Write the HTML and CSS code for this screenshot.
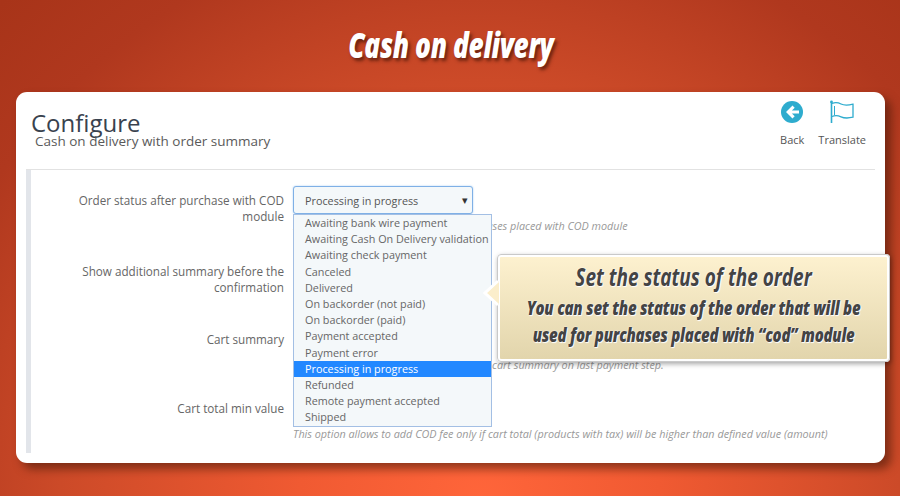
FILE: index.html
```html
<!DOCTYPE html>
<html>
  <head>
    <title>Cash on delivery</title>
    <link rel="stylesheet" href="styles.css">
  </head>
  <body>
    <h1 class="banner"><span>Cash on delivery</span></h1>
    <div class="card">
      <div class="page-head">
        <div class="page-titles">
          <h2>Configure</h2>
          <p>Cash on delivery with order summary</p>
        </div>
        <div class="toolbar">
          <a class="tool">
            <svg width="24" height="24" viewBox="0 0 24 24">
              <circle cx="12" cy="12" r="11" fill="#2eacce"/>
              <path d="M12.5 5.5 6 12l6.5 6.5 2.2-2.2-2.8-2.7H19v-3.2h-7.1l2.8-2.7z" fill="#fff"/>
            </svg>
            <span>Back</span>
          </a>
          <a class="tool">
            <svg width="26" height="24" viewBox="0 0 26 24">
              <circle cx="2.5" cy="2" r="1.4" fill="#2eacce"/>
              <path d="M2.5 2v21" stroke="#2eacce" stroke-width="1.6" fill="none"/>
              <path d="M3 3.5c3-1.2 6-1 9 .5s6 1.6 12 .2v13c-6 1.4-9 1-12-.4s-6-1.6-9-.3" stroke="#2eacce" stroke-width="1.3" fill="none"/>
              <path d="M5.5 6v9" stroke="#2eacce" stroke-width="1" fill="none"/>
            </svg>
            <span>Translate</span>
          </a>
        </div>
      </div>
      <div class="panel">
        <form class="form">
          <label>Order status after purchase with COD module</label>
          <div>
            <div class="select">Processing in progress<i class="caret">&#9662;</i></div>
            <p class="help">Set the status of the next order for purchases placed with COD module</p>
          </div>
          <label>Show additional summary before the confirmation</label>
          <div></div>
          <label>Cart summary</label>
          <div class="control">
            <p class="help">Enable this option if you want to see your cart summary on last payment step.</p>
          </div>
          <label>Cart total min value</label>
          <div class="control">
            <p class="help">This option allows to add COD fee only if cart total (products with tax) will be higher than defined value (amount)</p>
          </div>
        </form>
        <ul class="options">
          <li>Awaiting bank wire payment</li>
          <li>Awaiting Cash On Delivery validation</li>
          <li>Awaiting check payment</li>
          <li>Canceled</li>
          <li>Delivered</li>
          <li>On backorder (not paid)</li>
          <li>On backorder (paid)</li>
          <li>Payment accepted</li>
          <li>Payment error</li>
          <li class="selected">Processing in progress</li>
          <li>Refunded</li>
          <li>Remote payment accepted</li>
          <li>Shipped</li>
        </ul>
      </div>
    </div>
    <div class="callout">
      <svg class="callout-arrow" width="16" height="28" viewBox="0 0 16 28">
        <path d="M16 2 2 14l14 12z" fill="#fbeecb"/>
        <path d="M15 2 2 14l13 12" fill="none" stroke="#fff" stroke-width="3"/>
      </svg>
      <h3>Set the status of the order</h3>
      <p>You can set the status of the order that will be</p>
      <p>used for purchases placed with “cod” module</p>
    </div>
  </body>
</html>
```

FILE: styles.css
```css
html,
body {
  height: 100%;
}

body {
  margin: 0;
  position: relative;
  overflow: hidden;
  padding: 24px 15px 0 16px;
  box-sizing: border-box;
  font-family: "Open Sans", sans-serif;
  background: radial-gradient(circle at 480px 500px, #ff653a 0, #f05a32 180px, #cc4a28 420px, #b0381e 580px, #a83419 690px);
}

.banner {
  display: flex;
  justify-content: center;
  margin: 0;
  height: 68px;
  line-height: 41px;
  color: #fff;
  font-size: 35px;
  font-style: italic;
  font-weight: 800;
  text-shadow: 3px 3px 4px rgba(70, 20, 5, 0.7);
}

.banner span {
  white-space: nowrap;
  letter-spacing: -0.5px;
  transform: scaleX(0.75);
}

.card {
  height: 371px;
  box-sizing: border-box;
  padding: 0 10px 10px;
  background: #fff;
  border-radius: 11px;
  box-shadow: 6px 6px 10px rgba(60, 20, 5, 0.55);
}

.page-head {
  display: flex;
  justify-content: space-between;
  height: 77px;
  border-bottom: 1px solid #e2e2e2;
}

.page-titles {
  padding: 16px 0 0 5px;
}

.page-titles h2 {
  margin: 0;
  font-size: 24px;
  font-weight: normal;
  line-height: 30px;
  color: #39424e;
}

.page-titles p {
  margin: -6px 0 0 4px;
  font-size: 13.5px;
  line-height: 19px;
  color: #5a5a5a;
}

.toolbar {
  display: flex;
  gap: 14px;
  padding: 8px 9px 0 0;
}

.tool {
  display: flex;
  flex-direction: column;
  align-items: center;
  gap: 8px;
  font-size: 11px;
  line-height: 16px;
  color: #555;
}

.panel {
  position: relative;
  height: 283px;
  box-sizing: border-box;
  padding-top: 16px;
  background: #fff;
  border-left: 5px solid #e2e5ea;
}

.form {
  display: grid;
  grid-template-columns: 253px 1fr;
  grid-template-rows: 71px 68px 69px auto;
  column-gap: 9px;
}

.form label {
  padding: 6px 0 0 30px;
  font-size: 11.7px;
  line-height: 16px;
  text-align: right;
  color: #666;
}

.select {
  position: relative;
  width: 180px;
  height: 28px;
  box-sizing: border-box;
  padding-left: 11px;
  font-size: 10.8px;
  line-height: 27px;
  color: #555;
  background: #f4f8fa;
  border: 1px solid #7fb0e6;
  border-radius: 3px;
  box-shadow: 0 0 2px #a9cdf2;
}

.caret {
  position: absolute;
  right: 4px;
  top: -1px;
  font-style: normal;
  font-size: 11px;
  color: #333;
}

.help {
  margin: 4px 0 0;
  font-size: 10.8px;
  line-height: 16px;
  font-style: italic;
  white-space: nowrap;
  color: #999;
}

.control {
  padding-top: 28px;
}

.options {
  position: absolute;
  left: 262px;
  top: 44px;
  width: 199px;
  margin: 0;
  padding: 0;
  box-sizing: border-box;
  list-style: none;
  font-size: 10.8px;
  line-height: 16.2px;
  white-space: nowrap;
  color: #666;
  background: #f4f8fa;
  border: 1px solid #a3bfe4;
}

.options li {
  padding-left: 11px;
}

.options .selected {
  color: #fff;
  background: #2288ff;
}

.callout {
  position: absolute;
  left: 497px;
  top: 254px;
  width: 393px;
  height: 108px;
  box-sizing: border-box;
  display: flex;
  flex-direction: column;
  align-items: center;
  padding-top: 4px;
  color: #444;
  font-style: italic;
  font-weight: 800;
  background: linear-gradient(#fdf1cf, #e2d5ac);
  border: 3px solid #fff;
  border-radius: 4px;
  outline: 1px solid #c9c9c9;
  outline-offset: -1px;
  box-shadow: 1px 2px 5px rgba(0, 0, 0, 0.35);
  text-shadow: 0 0 2px #fff, 1px 1px 1px #fff;
}

.callout-arrow {
  position: absolute;
  left: -17px;
  top: 22px;
}

.callout h3 {
  flex: none;
  margin: 0 0 3px;
  font-size: 25px;
  line-height: 30px;
  white-space: nowrap;
  transform: scaleX(0.76);
}

.callout p {
  flex: none;
  margin: 0;
  font-size: 20px;
  line-height: 27px;
  white-space: nowrap;
  letter-spacing: -0.3px;
  transform: scaleX(0.75);
}
```
